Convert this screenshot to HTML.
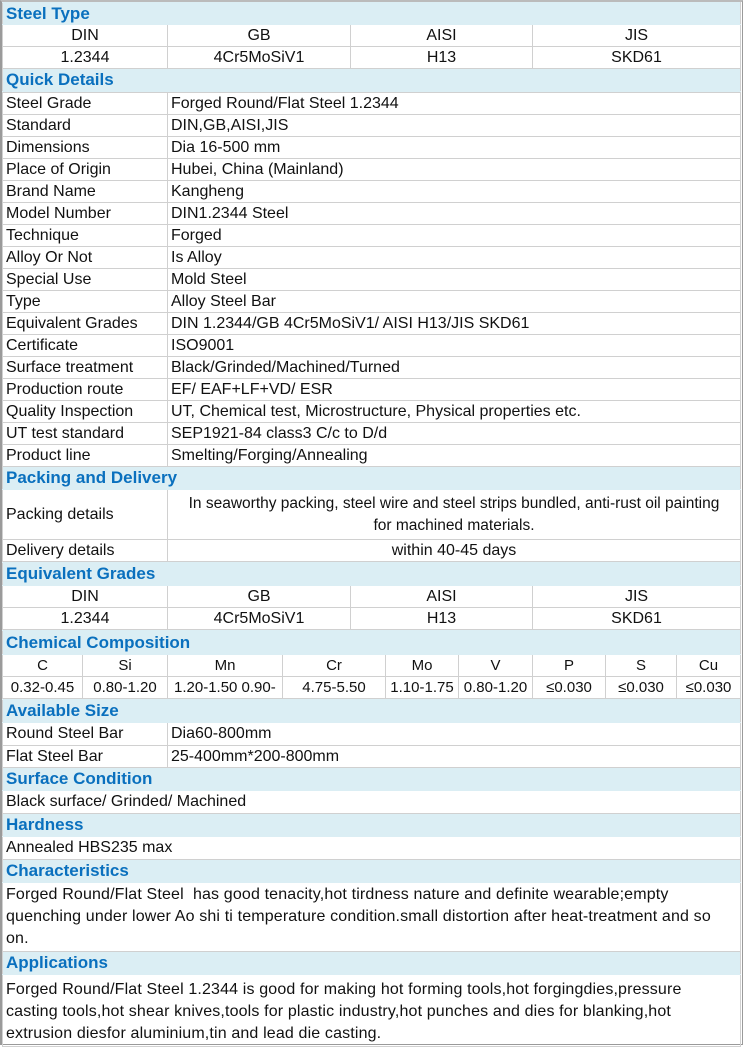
<!DOCTYPE html>
<html><head><meta charset="utf-8"><style>
*{margin:0;padding:0;box-sizing:border-box}
body{width:743px;height:1045px;background:#fff;font-family:"Liberation Sans",sans-serif;font-size:16px;color:#111;overflow:hidden}
#w{position:absolute;left:0;top:0;width:743px;height:1045px;border:1px solid #9a9a9a;border-left-width:2px;border-top:2px solid #bbb}
table{border-collapse:collapse;table-layout:fixed;width:739px}
td{border:1px solid #d0d0d0;height:22px;padding:0 3px;white-space:nowrap;overflow:hidden;line-height:20px}
td.c{text-align:center}
tr.h td{background:#dbeef4;color:#0a70be;font-weight:bold;font-size:17px;border-color:#dbeef4 #d0d0d0;height:22px}
td.p{line-height:22px;height:auto;padding:1px 3px;letter-spacing:0.15px}
.t td{height:23px}
tr.h.t td{height:23px}
</style></head><body><div id="w">
<table>
<col style="width:165px"><col style="width:183px"><col style="width:182px"><col>
<tr class="h"><td colspan="4">Steel Type</td></tr>
<tr><td class="c">DIN</td><td class="c">GB</td><td class="c">AISI</td><td class="c">JIS</td></tr>
<tr><td class="c">1.2344</td><td class="c">4Cr5MoSiV1</td><td class="c">H13</td><td class="c">SKD61</td></tr>
<tr class="h"><td colspan="4" style="height:23px">Quick Details</td></tr>
</table>
<table><col style="width:165px"><col>
<tr><td>Steel Grade</td><td>Forged Round/Flat Steel 1.2344</td></tr>
<tr><td>Standard</td><td>DIN,GB,AISI,JIS</td></tr>
<tr><td>Dimensions</td><td>Dia 16-500 mm</td></tr>
<tr><td>Place of Origin</td><td>Hubei, China (Mainland)</td></tr>
<tr><td>Brand Name</td><td>Kangheng</td></tr>
<tr><td>Model Number</td><td>DIN1.2344 Steel</td></tr>
<tr><td>Technique</td><td>Forged</td></tr>
<tr><td>Alloy Or Not</td><td>Is Alloy</td></tr>
<tr><td>Special Use</td><td>Mold Steel</td></tr>
<tr><td>Type</td><td>Alloy Steel Bar</td></tr>
<tr><td>Equivalent Grades</td><td>DIN 1.2344/GB 4Cr5MoSiV1/ AISI H13/JIS SKD61</td></tr>
<tr><td>Certificate</td><td>ISO9001</td></tr>
<tr><td>Surface treatment</td><td>Black/Grinded/Machined/Turned</td></tr>
<tr><td>Production route</td><td>EF/ EAF+LF+VD/ ESR</td></tr>
<tr><td>Quality Inspection</td><td>UT, Chemical test, Microstructure, Physical properties etc.</td></tr>
<tr><td>UT test standard</td><td>SEP1921-84 class3 C/c to D/d</td></tr>
<tr><td>Product line</td><td>Smelting/Forging/Annealing</td></tr>
<tr class="h"><td colspan="2" style="height:23px">Packing and Delivery</td></tr>
<tr><td style="height:50px">Packing details</td><td class="c p" style="letter-spacing:0;font-size:15.5px">In seaworthy packing, steel wire and steel strips bundled, anti-rust oil painting<br>for machined materials.</td></tr>
<tr><td>Delivery details</td><td class="c">within 40-45 days</td></tr>
</table>
<table>
<col style="width:165px"><col style="width:183px"><col style="width:182px"><col>
<tr class="h"><td colspan="4" style="height:23px">Equivalent Grades</td></tr>
<tr><td class="c">DIN</td><td class="c">GB</td><td class="c">AISI</td><td class="c">JIS</td></tr>
<tr><td class="c">1.2344</td><td class="c">4Cr5MoSiV1</td><td class="c">H13</td><td class="c">SKD61</td></tr>
</table>
<table style="font-size:15px">
<col style="width:80px"><col style="width:85px"><col style="width:115px"><col style="width:103px"><col style="width:73px"><col style="width:74px"><col style="width:73px"><col style="width:71px"><col>
<tr class="h"><td colspan="9" style="height:24px">Chemical Composition</td></tr>
<tr><td class="c">C</td><td class="c">Si</td><td class="c">Mn</td><td class="c">Cr</td><td class="c">Mo</td><td class="c">V</td><td class="c">P</td><td class="c">S</td><td class="c">Cu</td></tr>
<tr><td class="c" style="padding:0">0.32-0.45</td><td class="c">0.80-1.20</td><td style="padding-left:6px">1.20-1.50 0.90-</td><td class="c">4.75-5.50</td><td class="c" style="padding:0">1.10-1.75</td><td class="c" style="padding:0">0.80-1.20</td><td class="c">≤0.030</td><td class="c">≤0.030</td><td class="c">≤0.030</td></tr>
</table>
<table><col style="width:165px"><col>
<tr class="h t"><td colspan="2">Available Size</td></tr>
<tr class="t"><td>Round Steel Bar</td><td>Dia60-800mm</td></tr>
<tr><td>Flat Steel Bar</td><td>25-400mm*200-800mm</td></tr>
<tr class="h t"><td colspan="2">Surface Condition</td></tr>
<tr class="t"><td colspan="2">Black surface/ Grinded/ Machined</td></tr>
<tr class="h t"><td colspan="2">Hardness</td></tr>
<tr class="t"><td colspan="2">Annealed HBS235 max</td></tr>
<tr class="h t"><td colspan="2">Characteristics</td></tr>
<tr><td colspan="2" class="p">Forged Round/Flat Steel&nbsp; has good tenacity,hot tirdness nature and definite wearable;empty<br>quenching under lower Ao shi ti temperature condition.small distortion after heat-treatment and so<br>on.</td></tr>
<tr class="h t"><td colspan="2">Applications</td></tr>
<tr><td colspan="2" class="p" style="padding-top:4px">Forged Round/Flat Steel 1.2344 is good for making hot forming tools,hot forgingdies,pressure<br>casting tools,hot shear knives,tools for plastic industry,hot punches and dies for blanking,hot<br>extrusion diesfor aluminium,tin and lead die casting.</td></tr>
</table>
</div></body></html>
